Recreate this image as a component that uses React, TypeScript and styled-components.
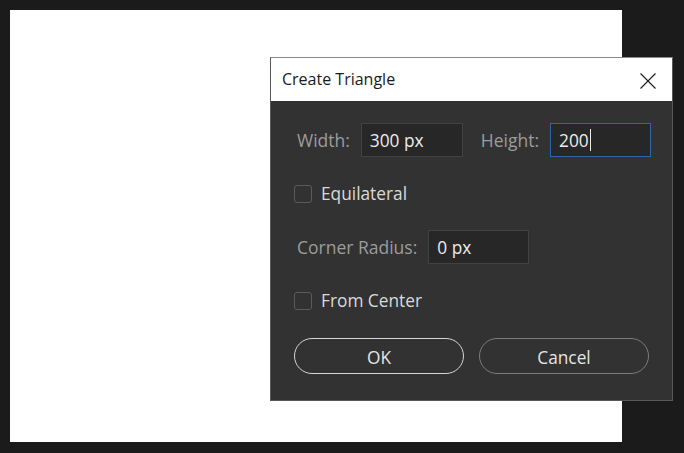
import React from 'react';
import styled, { createGlobalStyle } from 'styled-components';

const GlobalStyle = createGlobalStyle`
    html, body {
        margin: 0;
        padding: 0;
        background: #1b1b1b;
    }
    body {
        font-family: "Open Sans", "Noto Sans", sans-serif;
    }
`

const CloseIcon = () => (
    <svg width='16' height='16' viewBox='0 0 16 16'>
        <path d='M0.5 0.5 L15.5 15.5 M15.5 0.5 L0.5 15.5' stroke='#1a1a1a' strokeWidth='1.1' fill='none' />
    </svg>
);

const Checkbox = ({ label }: { label: string }) => (
    <CheckRow>
        <CheckBoxSquare />
        <CheckLabel>{label}</CheckLabel>
    </CheckRow>
);

export default function App() {
    return (
        <Page>
            <GlobalStyle />
            <Canvas />
            <Dialog>
                <TitleBar>
                    <TitleText>Create Triangle</TitleText>
                    <CloseButton>
                        <CloseIcon />
                    </CloseButton>
                </TitleBar>
                <Body>
                    <FieldRow>
                        <FieldLabel>Width:</FieldLabel>
                        <Field $width={102}>300 px</Field>
                        <FieldLabel $spaced>Height:</FieldLabel>
                        <Field $width={101} $focused>
                            200<Caret />
                        </Field>
                    </FieldRow>
                    <Checkbox label='Equilateral' />
                    <FieldRow>
                        <FieldLabel>Corner Radius:</FieldLabel>
                        <Field $width={101}>0 px</Field>
                    </FieldRow>
                    <Checkbox label='From Center' />
                    <ButtonRow>
                        <Button $primary>OK</Button>
                        <Button>Cancel</Button>
                    </ButtonRow>
                </Body>
            </Dialog>
        </Page>
    );
}

const Page = styled.div`
    position: relative;
    width: 684px;
    height: 453px;
    padding: 10px;
    box-sizing: border-box;
    background: #1b1b1b;
    overflow: hidden;
`

const Canvas = styled.div`
    width: 612px;
    height: 432px;
    background: #ffffff;
`

const Dialog = styled.div`
    position: absolute;
    left: 270px;
    top: 57px;
    width: 403px;
    height: 344px;
    box-sizing: border-box;
    border: 1px solid #595959;
    border-top-color: #8a8a8a;
    background: #323232;
    display: flex;
    flex-direction: column;
`

const TitleBar = styled.div`
    height: 43px;
    background: #ffffff;
    display: flex;
    align-items: center;
    justify-content: space-between;
    padding: 0 16px 0 11px;
`

const TitleText = styled.span`
    font-size: 16px;
    color: #1a1a1a;
    margin-top: -1px;
`

const CloseButton = styled.div`
    display: flex;
    align-items: center;
    margin-top: 2px;
`

const Body = styled.div`
    display: flex;
    flex-direction: column;
    padding: 22px 0 0 23px;
    gap: 27px;
`

const FieldRow = styled.div`
    display: flex;
    align-items: center;
    padding-left: 3px;
`

const FieldLabel = styled.span<{ $spaced?: boolean }>`
    font-size: 17.5px;
    color: #9c9c9c;
    margin-right: 11px;
    margin-left: ${p => (p.$spaced ? '18px' : '0')};
`

const Field = styled.div<{ $width: number; $focused?: boolean }>`
    width: ${p => p.$width}px;
    height: 34px;
    box-sizing: border-box;
    display: flex;
    align-items: center;
    padding-left: 8px;
    background: #272727;
    border: 1px solid ${p => (p.$focused ? '#2f64a8' : '#424242')};
    font-size: 17.3px;
    color: #ececec;
`

const Caret = styled.span`
    display: inline-block;
    width: 1px;
    height: 22px;
    margin-left: 1px;
    background: #ececec;
`

const CheckRow = styled.div`
    display: flex;
    align-items: center;
    gap: 9px;
    height: 19px;
`

const CheckBoxSquare = styled.div`
    width: 18px;
    height: 18px;
    box-sizing: border-box;
    border: 1px solid #5a5a5a;
    border-radius: 3px;
`

const CheckLabel = styled.span`
    font-size: 17.3px;
    color: #dadada;
`

const ButtonRow = styled.div`
    display: flex;
    gap: 15px;
    margin-top: 1px;
`

const Button = styled.button<{ $primary?: boolean }>`
    width: 170px;
    height: 36px;
    border-radius: 18px;
    background: transparent;
    border: 1.5px solid ${p => (p.$primary ? '#d6d6d6' : '#7c7c7c')};
    color: #e4e4e4;
    font-family: "Open Sans", "Noto Sans", sans-serif;
    font-size: 17.3px;
    padding: 3px 0 0;
`
